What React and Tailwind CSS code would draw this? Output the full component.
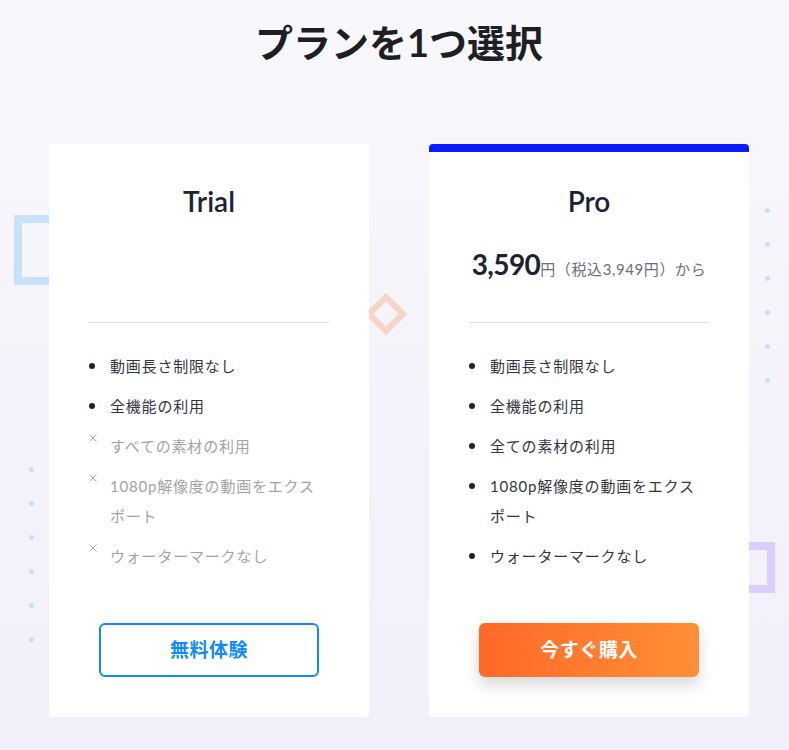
import React from "react";

const FONT = { fontFamily: '"Lato", "Noto Sans CJK JP", sans-serif' };

function Item({ text, disabled }) {
  return (
    <li className="flex">
      <div className="w-[21px] shrink-0 h-[30px] flex">
        {disabled ? (
          <svg width="8" height="8" viewBox="0 0 8 8" className="mt-[3px] ml-[0px]">
            <path d="M0.5 0.5 L7.5 7.5 M7.5 0.5 L0.5 7.5" stroke="#a6a6a6" strokeWidth="1" />
          </svg>
        ) : (
          <div className="self-center w-[6px] h-[6px] rounded-full bg-[#1c2133]" />
        )}
      </div>
      <span
        className={`w-[212px] text-[15px] leading-[30px] tracking-[0.8px] ${
          disabled ? "text-[#a3a3a3]" : "text-[#333640]"
        }`}
      >
        {text}
      </span>
    </li>
  );
}

function Card({ title, pro, children, button }) {
  return (
    <div
      className={`relative z-10 w-[320px] h-[573px] bg-white rounded-[4px] border-t-[8px] ${
        pro ? "border-[#0d1bff]" : "border-white"
      } flex flex-col px-10 pb-10 pt-[31px]`}
    >
      <h2 className="text-[28px] leading-[36px] font-semibold text-center text-[#1b2234]">{title}</h2>
      <div className="mt-[23px] h-[44px] flex items-baseline justify-center whitespace-nowrap">
        {pro && (
          <>
            <span className="text-[28px] leading-[44px] font-bold text-[#1b2234] tracking-[-0.6px]">3,590</span>
            <span className="text-[15px] text-[#6b6f7a] tracking-[0.6px]">円（税込3,949円）から</span>
          </>
        )}
      </div>
      <div className="mt-[36px] h-px bg-[#dddddd]" />
      <ul className="mt-[28px] flex flex-col gap-[10px]">{children}</ul>
      <div className="mt-auto flex justify-center">{button}</div>
    </div>
  );
}

export default function App() {
  const dotsY = [0, 1, 2, 3, 4, 5];
  return (
    <div
      className="relative w-full h-[750px] overflow-hidden bg-gradient-to-b from-[#f8f8fc] to-[#f1effa] pl-[9px]"
      style={FONT}
    >
      {/* decorations */}
      <div className="absolute left-[14px] top-[215px] w-[70px] h-[70px] border-[8px] border-[#c9e2fb]" />
      <div className="absolute left-[371px] top-[299px] w-[30px] h-[30px] rotate-45 border-[6px] border-[#f6d4c6]" />
      <div className="absolute left-[724px] top-[542px] w-[51px] h-[51px] border-[8px] border-[#dbcdfd]" />
      {dotsY.map((i) => (
        <div
          key={"r" + i}
          className="absolute w-[5px] h-[5px] rounded-full bg-[#c8dff8]"
          style={{ left: 765, top: 208 + i * 34 }}
        />
      ))}
      {dotsY.map((i) => (
        <div
          key={"l" + i}
          className="absolute w-[5px] h-[5px] rounded-full bg-[#c8dff8]"
          style={{ left: 29, top: 467 + i * 34 }}
        />
      ))}

      <h1 className="relative z-10 pt-[19px] text-center text-[38px] leading-[46px] font-bold text-[#1e1f24]">
        プランを1つ選択
      </h1>

      <div className="mt-[79px] flex justify-center gap-[60px]">
        <Card
          title="Trial"
          button={
            <button className="w-[220px] h-[54px] rounded-[6px] border-2 border-[#0e8bff] bg-white text-[#0e8bff] text-[19px] font-bold tracking-[0.5px]">
              無料体験
            </button>
          }
        >
          <Item text="動画長さ制限なし" />
          <Item text="全機能の利用" />
          <Item text="すべての素材の利用" disabled />
          <Item text="1080p解像度の動画をエクスポート" disabled />
          <Item text="ウォーターマークなし" disabled />
        </Card>
        <Card
          title="Pro"
          pro
          button={
            <button className="w-[220px] h-[54px] rounded-[6px] bg-gradient-to-r from-[#ff6827] to-[#ff8f36] text-white text-[19px] font-bold tracking-[0.5px] shadow-[0_8px_16px_rgba(0,0,0,0.16)]">
              今すぐ購入
            </button>
          }
        >
          <Item text="動画長さ制限なし" />
          <Item text="全機能の利用" />
          <Item text="全ての素材の利用" />
          <Item text="1080p解像度の動画をエクスポート" />
          <Item text="ウォーターマークなし" />
        </Card>
      </div>
    </div>
  );
}
